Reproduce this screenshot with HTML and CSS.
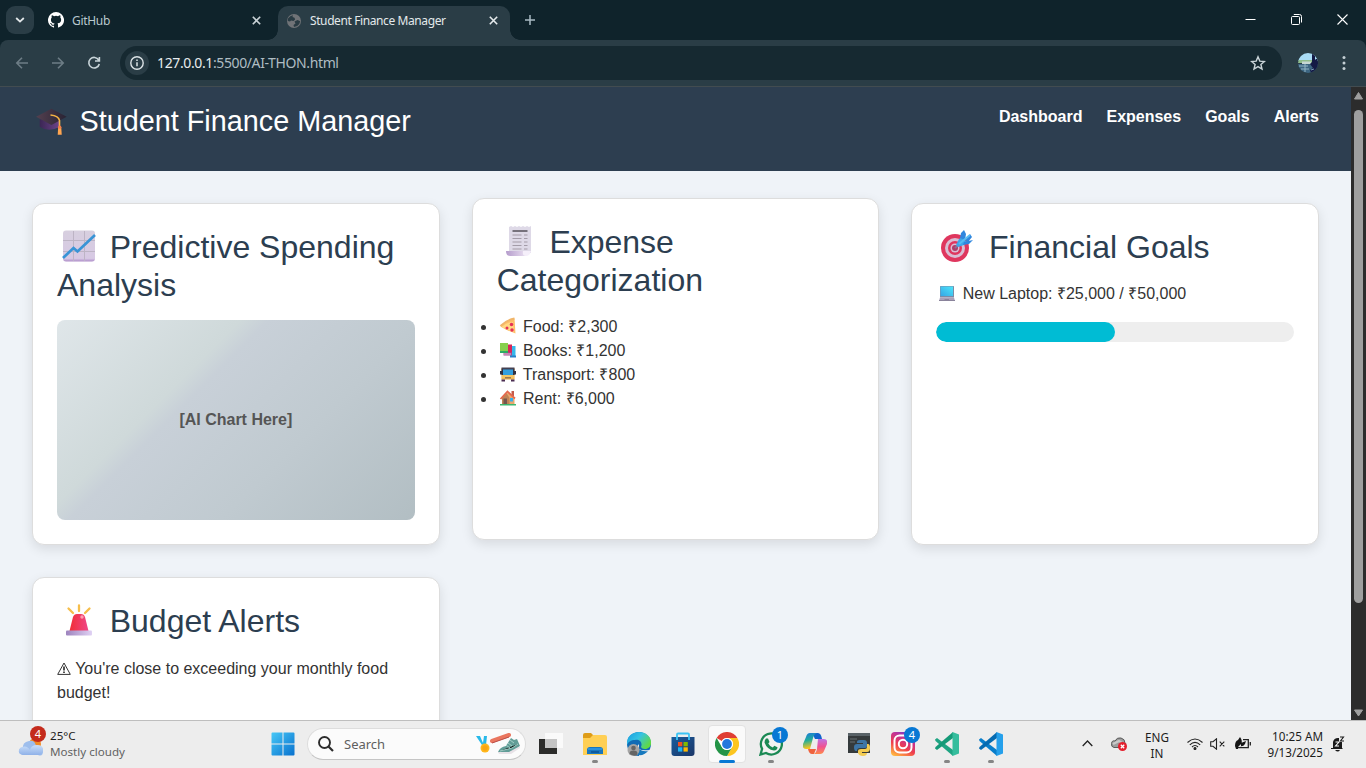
FILE: index.html
```html
<!DOCTYPE html>
<html lang="en">
<head>
<meta charset="utf-8">
<title>Student Finance Manager</title>
<link rel="stylesheet" href="styles.css">
</head>
<body>
<div class="browser">
  <div class="tabstrip">
    <div class="tab-search"><svg width="10" height="6" viewBox="0 0 10 6"><path d="M1.200 1l3.800 3.600L8.800 1" fill="none" stroke="#e3e8ea" stroke-width="1.800"/></svg></div>
    <div class="tab tab-idle">
      <svg width="16" height="16" viewBox="0 0 16 16"><path fill="#fff" d="M8 0a8 8 0 0 0-2.530 15.590c.4.070.55-.17.55-.38v-1.490c-2.010.37-2.530-.49-2.690-.94-.09-.23-.48-.94-.82-1.130-.28-.15-.68-.52-.010-.53.63-.010 1.080.58 1.230.82.72 1.210 1.870.87 2.330.66.070-.52.280-.87.510-1.070-1.780-.2-3.640-.89-3.640-3.950 0-.87.310-1.590.820-2.150-.080-.2-.36-1.020.080-2.120 0 0 .67-.21 2.200.82a7.400 7.400 0 0 1 4 0c1.530-1.040 2.200-.82 2.200-.82.440 1.100.160 1.920.080 2.120.510.560.820 1.270.820 2.150 0 3.070-1.870 3.750-3.650 3.950.290.250.540.730.540 1.480v2.200c0 .210.150.460.550.380A8 8 0 0 0 8 0z"/></svg>
      <span class="tab-title">GitHub</span>
      <svg class="tab-close" width="9" height="9" viewBox="0 0 9 9"><path d="M.8.8l7.400 7.400M8.200.8L.8 8.200" stroke="#c9d2d6" stroke-width="1.600"/></svg>
    </div>
    <div class="tab tab-active">
      <svg width="16" height="16" viewBox="0 0 16 16"><circle cx="8" cy="8" r="7" fill="#707377"/><path d="M2 5.500Q4 2.500 7 2.300L6.500 4l2 .8.6 1.700L7.500 8 5 7.500 4 8.500 1.800 8z" fill="#293b43"/><path d="M8.500 8.500l3-1.500 2.700 1.200q-.3 3-3 4.800l-3.200 1L7.500 12l2-1.500z" fill="#293b43"/></svg>
      <span class="tab-title">Student Finance Manager</span>
      <svg class="tab-close" width="9" height="9" viewBox="0 0 9 9"><path d="M.8.8l7.400 7.400M8.200.8L.8 8.200" stroke="#e5eaec" stroke-width="1.600"/></svg>
    </div>
    <svg class="new-tab" width="10" height="10" viewBox="0 0 10 10"><path d="M5 0v10M0 5h10" stroke="#a9bac4" stroke-width="1.500"/></svg>
    <div class="window-controls">
      <svg width="11" height="11" viewBox="0 0 11 11"><path d="M.5 5.500h10" stroke="#fff"/></svg>
      <svg width="11" height="11" viewBox="0 0 11 11" fill="none" stroke="#fff"><rect x=".5" y="2.500" width="8" height="8" rx="1"/><path d="M2.800.5H8.500a2 2 0 0 1 2 2v6"/></svg>
      <svg width="11" height="11" viewBox="0 0 11 11"><path d="M.5.5l10 10M10.500.5l-10 10" stroke="#fff" stroke-width="1.100"/></svg>
    </div>
  </div>
  <div class="toolbar">
    <div class="nav-buttons">
      <svg width="14" height="12" viewBox="0 0 14 12"><path d="M13 6H1.800M7 .8L1.800 6 7 11.200" fill="none" stroke="#6d7d86" stroke-width="1.600"/></svg>
      <svg width="14" height="12" viewBox="0 0 14 12"><path d="M1 6h11.200M7 .8L12.200 6 7 11.200" fill="none" stroke="#6d7d86" stroke-width="1.600"/></svg>
      <svg width="14" height="14" viewBox="0 0 14 14"><path d="M11.700 4A5.300 5.300 0 1 0 12.300 8M12.400 1v4H8" fill="none" stroke="#c8d4d9" stroke-width="1.600"/></svg>
    </div>
    <div class="omnibox">
      <span class="site-info"><svg width="14" height="14" viewBox="0 0 14 14"><circle cx="7" cy="7" r="6.200" fill="none" stroke="#dce3e6" stroke-width="1.400"/><path d="M7 6.200v4M7 3.600v1.500" stroke="#dce3e6" stroke-width="1.500"/></svg></span>
      <span class="url"><b>127.0.0.1</b>:5500/AI-THON.html</span>
      <svg class="star" width="16" height="16" viewBox="0 0 16 16"><path d="M8 1.800l1.800 4.300 4.600.4-3.500 3 1.100 4.500L8 11.600 4 14l1.100-4.500-3.500-3 4.600-.4z" fill="none" stroke="#cbd5d9" stroke-width="1.400"/></svg>
    </div>
    <svg class="avatar" width="20" height="20" viewBox="0 0 20 20"><defs><clipPath id="av"><circle cx="10" cy="10" r="10"/></clipPath></defs><g clip-path="url(#av)"><path fill="#a9dcf5" d="M0 0h20v8H0z"/><path fill="#90bd8c" d="M0 7h15v3H0z"/><path fill="#c6d7d4" d="M4 8.500h9v3.500H4z"/><path fill="#3d6682" d="M0 11h20v9H0z"/><path d="M1 13h9M3 16h8M7 11v8" stroke="#91b5c5"/><path fill="#141a45" d="M14 0h3v7l1-1h2v14h-7l-1-3 3-2-3-4 2-2z"/><path d="M13 17l3-1" stroke="#7b9db8"/></g></svg>
    <svg class="kebab" width="4" height="16" viewBox="0 0 4 16" fill="#c5d0d5"><circle cx="2" cy="2.500" r="1.500"/><circle cx="2" cy="8" r="1.500"/><circle cx="2" cy="13.500" r="1.500"/></svg>
  </div>
  <div class="viewport">
    <div class="page">
      <header class="site-header">
        <h1><span class="emoji"><svg viewBox="0 0 32 32"><defs><linearGradient id="cap" x2="1"><stop stop-color="#54404f"/><stop offset="1" stop-color="#292334"/></linearGradient><linearGradient id="capb" x2="1"><stop stop-color="#3b2654"/><stop offset="1" stop-color="#6b448a"/></linearGradient></defs><path fill="url(#capb)" d="M3 15v8q10 7 22 0v-9z"/><path fill="url(#cap)" d="M-1 12L16 3l17 9-17 9z"/><path d="M15 10q9 1 10 6v7" fill="none" stroke="#f5b344" stroke-width="1.800"/><path fill="#ffa550" d="M23.500 24h3.500l.5 8h-4.500z"/><circle cx="25.200" cy="23.500" r="1.900" fill="#f17d4d"/></svg></span> Student Finance Manager</h1>
        <nav><a>Dashboard</a><a>Expenses</a><a>Goals</a><a>Alerts</a></nav>
      </header>
      <main class="cards">
        <section class="card">
          <h2><span class="emoji"><svg viewBox="0 0 32 32"><defs><linearGradient id="ch" y2="1" x2="0"><stop stop-color="#d7cfdf"/><stop offset=".9" stop-color="#d7c9e4"/><stop offset="1" stop-color="#ad8cc8"/></linearGradient></defs><rect y=".5" width="32" height="31" rx="3" fill="url(#ch)"/><path d="M10.500 1v30M21.500 1v30M0 10.500h32M0 21.500h32" stroke="#bdb4c5"/><path d="M0 28l10.500-10 4 3.500L32 5" fill="none" stroke="#3994d6" stroke-width="2.700"/></svg></span> Predictive Spending Analysis</h2>
          <div class="chart">[AI Chart Here]</div>
        </section>
        <section class="card card-raised">
          <h2><span class="emoji"><svg viewBox="0 0 32 32"><defs><linearGradient id="sc" x2="1"><stop stop-color="#b59ccc"/><stop offset="1" stop-color="#eee6f4"/></linearGradient></defs><path fill="#ded9e7" d="M6 2l2-1 2 1 2-1 2 1 2-1 2 1 2-1 2 1 2-1 2 1 2-1v27H6z"/><path fill="url(#sc)" d="M3 26h17q1 5 5 5H7q-4 0-4-5z"/><path fill="#f5effa" d="M20 26h8q-1 5-5 5t-3-5z"/><path d="M9.500 6h15" stroke="#77727c" stroke-width="2"/><path d="M9.500 10h9M21 10h3.500M9.500 13.500h9M21 13.500h3.500M9.500 17h9M21 17h3.500M9.500 20.500h9M21 20.500h3.500M9.500 24h9M21 24h3.500" stroke="#a39ba8" stroke-width="1.200"/></svg></span> Expense Categorization</h2>
          <ul>
            <li><span class="emoji"><svg viewBox="0 0 32 32"><path fill="#ffbf68" d="M1 17Q12 4 29 1l2 30Q15 26 1 17z"/><path fill="#ffd883" d="M3 18Q14 8 26 8l2 20Q14 24 3 18z"/><path d="M1 16Q13 4 29 1" fill="none" stroke="#f0b56a" stroke-width="4"/><g fill="#e53157"><circle cx="23" cy="13" r="3.500"/><circle cx="14" cy="20" r="3"/><circle cx="24" cy="24" r="3.500"/></g></svg></span> Food: ₹2,300</li>
            <li><span class="emoji"><svg viewBox="0 0 32 32"><path fill="#36b7eb" d="M20 8h11v22H20z"/><path fill="#267fc8" d="M20 27h12v4H20z"/><path fill="#d82458" d="M12 5h12v19H12z"/><path fill="#a94990" d="M7 21h17v6H7z"/><path fill="#e3c9d9" d="M7 23h15v2H7z"/><path fill="#86cf4d" d="M0 2h16v18H0z"/><path fill="#2dac64" d="M0 18h16v4H0z"/></svg></span> Books: ₹1,200</li>
            <li><span class="emoji"><svg viewBox="0 0 32 32"><path fill="#e9a940" d="M3 4h26v23H3z"/><path fill="#444052" d="M3 3h26v5H3z"/><path fill="#303142" d="M3 7h3v11H3zM26 7h3v11h-3zM0 10h3v7H0zM29 10h3v7h-3z"/><path fill="#329fdf" d="M6 7h20v11H6z"/><path fill="#f3c564" d="M4 18h24v7H4z"/><path fill="#9b7952" d="M10 22h12v3H10z"/><path fill="#4b2d52" d="M3 27h7v4H3zM22 27h7v4h-7z"/></svg></span> Transport: ₹800</li>
            <li><span class="emoji"><svg viewBox="0 0 32 32"><path fill="#e9a76d" d="M4 15L17 4l12 12v13H4z"/><path fill="#c08256" d="M4 16l9-10 6 10v13H4z"/><path fill="#c65a4a" d="M23 2h5v10h-5z"/><path d="M1 18L15 3l15 14" fill="none" stroke="#e5674c" stroke-width="3.500"/><path fill="#74564f" d="M7 17h7v12H7z"/><path fill="#3aaee9" d="M20 16h6v7h-6z"/><path fill="#3eb66f" d="M0 28h32v3H0z"/></svg></span> Rent: ₹6,000</li>
          </ul>
        </section>
        <section class="card">
          <h2><span class="emoji goal"><svg viewBox="0 0 32 32"><circle cx="14" cy="18" r="14" fill="#df365e"/><circle cx="14" cy="18" r="10" fill="#d9bed4"/><circle cx="14" cy="18" r="7" fill="#df365e"/><circle cx="14" cy="18" r="4.500" fill="#d9bed4"/><circle cx="14" cy="18" r="3" fill="#ad3e69"/><path d="M14 18l9-8" stroke="#8b6f95" stroke-width="2"/><path fill="#3ea6e9" d="M15 15l3-6 3-2 5 5-3 3-6 2z"/><path fill="#2f86de" d="M19 8l1-5 3-3 2 4-1 6zM24 10l5-6 2 3-4 5zM23 12l9-2-4 4-6 1z"/><path d="M18 14l11-9" stroke="#57bcf3" stroke-width="2"/></svg></span> Financial Goals</h2>
          <p><span class="emoji"><svg viewBox="0 0 32 32"><defs><linearGradient id="lap" x1="1" x2="0" y2="1"><stop stop-color="#4ce6fb"/><stop offset="1" stop-color="#36a5e5"/></linearGradient></defs><rect x="2" width="28" height="23" rx="1" fill="#7b8ba7"/><path fill="url(#lap)" d="M3 1h25v19H3z"/><path fill="#aaa0b9" d="M2 23h28l2 7H0z"/><path fill="#8a839b" d="M0 28h32v2H0zM11 26h9v3h-9z"/></svg></span> New Laptop: ₹25,000 / ₹50,000</p>
          <div class="progress"><div class="progress-fill" style="width: 50%"></div></div>
        </section>
        <section class="card">
          <h2><span class="emoji"><svg viewBox="0 0 32 32"><defs><linearGradient id="si" x2="1"><stop stop-color="#f12e36"/><stop offset="1" stop-color="#ef4688"/></linearGradient><linearGradient id="sb" x2="1"><stop stop-color="#9d83be"/><stop offset="1" stop-color="#e0d2f4"/></linearGradient></defs><path fill="url(#si)" d="M6.500 27L10 13q1-3 4-3h4q3 0 4 3l3.500 14z"/><circle cx="19" cy="13" r="1.700" fill="#ff9cad"/><rect x="3" y="26.500" width="26" height="5" rx="1" fill="url(#sb)"/><path d="M16 1.500V7M5.500 4.500L10 9M26.500 4.500L22 9" stroke="#f6be4b" stroke-width="2.300" stroke-linecap="round"/></svg></span> Budget Alerts</h2>
          <p class="alert"><svg class="warning" width="14" height="13" viewBox="0 0 14 13"><path d="M7 1L13.300 12.400H.7z" fill="none" stroke="#333"/><path d="M7 4.500v4M7 9.500v1.500" stroke="#333" stroke-width="1.700"/></svg> You're close to exceeding your monthly food budget!</p>
        </section>
      </main>
    </div>
    <div class="scrollbar">
      <svg width="9" height="8" viewBox="0 0 9 8"><path d="M4.500.5L8.500 7h-8z" fill="#9f9f9f" stroke="#9f9f9f" stroke-linejoin="round"/></svg>
      <div class="thumb"></div>
      <svg width="9" height="8" viewBox="0 0 9 8"><path d="M.5 1h8l-4 6z" fill="#9f9f9f" stroke="#9f9f9f" stroke-linejoin="round"/></svg>
    </div>
  </div>
</div>
<footer class="taskbar">
  <div class="weather">
    <div class="weather-icon"><svg width="26" height="20" viewBox="0 0 26 20"><defs><linearGradient id="cl" x2="0" y2="1"><stop stop-color="#cadff9"/><stop offset="1" stop-color="#8fb1e8"/></linearGradient></defs><circle cx="17" cy="6" r="6" fill="#f08b28"/><path fill="#9ebeec" d="M5 11Q4 4 11 3q6-1 7 5 7-1 7 5t-5 4H5q-5-1-4-5 1-3 4-1z"/><path fill="url(#cl)" d="M4 9q5-2 8 3 1-5 7-5 6 0 6 5 0 5-5 5H5q-5-1-4-5 1-3 3-3z"/></svg><span class="badge badge-red">4</span></div>
    <div class="weather-text"><span>25°C</span><span class="muted">Mostly cloudy</span></div>
  </div>
  <div class="app"><svg width="24" height="24" viewBox="0 0 24 24"><defs><linearGradient id="win" x2="1" y2="1"><stop stop-color="#47c8f7"/><stop offset="1" stop-color="#0871ce"/></linearGradient></defs><path fill="url(#win)" d="M.5 1.500q0-1 1-1H11.500v11H.5zM12.500.5h10q1 0 1 1v10h-11zM.5 12.500h11v11h-10q-1 0-1-1zM12.500 12.500h11v10q0 1-1 1h-10z"/></svg></div>
  <div class="search">
    <svg width="16" height="16" viewBox="0 0 16 16"><circle cx="6.500" cy="6.500" r="5.500" fill="none" stroke="#2c2c2c" stroke-width="1.900"/><path d="M10.500 10.500l4.500 4.500" stroke="#2c2c2c" stroke-width="2.200"/></svg>
    <span>Search</span>
    <svg class="search-art" width="46" height="24" viewBox="0 0 46 24"><path fill="#28b9e9" d="M1 4h4l3 7 1-7h3l-1 9H7z"/><circle cx="10" cy="16" r="4.500" fill="#ffb71c"/><circle cx="10" cy="16" r="2.800" fill="#f9a613"/><path d="M17 9L34 3" stroke="#ea765f" stroke-width="4" stroke-linecap="round"/><path d="M17 11L34 5" stroke="#bb4e49" stroke-width="1"/><path fill="#629d97" d="M23 20q2-5 8-6l5-8 3 2 3-1 3 7-4 4-9 3H25z"/><path d="M25 19l12-3 6-4M31 13l4 3M33 11l4 3M35 8l4 3" stroke="#a4cfc7" stroke-width="1"/><path fill="#e8e2e7" d="M23 20h11l11-6v2l-9 6H24z"/></svg>
  </div>
  <div class="app"><svg width="24" height="24" viewBox="0 0 24 24"><path fill="#2c2c2a" d="M0 7h18v15H0z"/><path fill="#fafafa" d="M6 1h18v15H6z"/><path fill="#c4c4c4" d="M6 7h12v9H6z"/></svg></div>
  <div class="app"><svg width="24" height="24" viewBox="0 0 24 24"><path fill="#de9c18" d="M0 3q0-2 2-2h6l3 3-3 5H0z"/><path fill="#ffcf54" d="M0 6h7l3-3h12q2 0 2 2v18H0z"/><path fill="#1977bf" d="M4 22v-4q0-3 3-3h10q3 0 3 3v4z"/><path fill="#2b91dd" d="M5 16h14v2H5z"/><path d="M8 20h8" stroke="#0e5b9e" stroke-width="2"/></svg><i class="dot"></i></div>
  <div class="app"><svg width="24" height="24" viewBox="0 0 24 24"><defs><linearGradient id="ed" x2="1" y2=".6"><stop stop-color="#179be0"/><stop offset=".5" stop-color="#35c3e3"/><stop offset="1" stop-color="#61d943"/></linearGradient></defs><circle cx="12" cy="12" r="12" fill="#106bb5"/><path fill="url(#ed)" d="M0 13C-1 5 5 0 12 0c8 0 13 6 12 12-1 6-9 6-10 3 2-5-2-8-6-7-4 0-7 2-8 5z"/><path fill="#eee" d="M12 12q-3 3 0 5t11 1v6H12z"/><path fill="#1678bd" d="M12 17q4 3 9 2-4 5-10 4z"/><circle cx="6.500" cy="18" r="6" fill="#a4a4a4"/><circle cx="6.500" cy="16" r="2.300" fill="#656565"/><path fill="#656565" d="M2.500 21.500q0-3 4-3t4 3-4 2-4-2z"/></svg></div>
  <div class="app"><svg width="24" height="24" viewBox="0 0 24 24"><defs><linearGradient id="st" y2="1"><stop stop-color="#185c9d"/><stop offset="1" stop-color="#1b3667"/></linearGradient></defs><path fill="url(#st)" d="M.5 5h23v16q0 3-3 3h-17q-3 0-3-3z"/><path d="M6 8V2.500q0-1 1-1h10q1 0 1 1V8" fill="none" stroke="#3ac3f4" stroke-width="1.800"/><path fill="#f25022" d="M7 10h4.300v4.300H7z"/><path fill="#7fba00" d="M12.500 10h4.300v4.300h-4.300z"/><path fill="#20b5f4" d="M7 15.300h4.300v4.300H7z"/><path fill="#ffb900" d="M12.500 15.300h4.300v4.300h-4.300z"/></svg></div>
  <div class="app app-active"><svg width="24" height="24" viewBox="0 0 24 24"><circle cx="12" cy="12" r="12" fill="#fff"/><path fill="#df3e34" d="M1.600 6A12 12 0 0 1 22.400 6H12a6 6 0 0 0-5.200 3z"/><path fill="#fcc51f" d="M22.400 6A12 12 0 0 1 12 24l5.200-9A6 6 0 0 0 12 6z"/><path fill="#249447" d="M1.600 6A12 12 0 0 0 12 24l5.200-9A6 6 0 0 1 6.800 15z"/><circle cx="12" cy="12" r="6" fill="#fff"/><circle cx="12" cy="12" r="4.900" fill="#2376dc"/></svg><i class="dot"></i></div>
  <div class="app"><svg width="24" height="24" viewBox="0 0 24 24"><path d="M1.500 22.500l1.600-5.600A10.500 10.500 0 1 1 7 21z" fill="#f2f2f2" stroke="#1b8954" stroke-width="2.300"/><path fill="#1b8954" d="M7 6.500h2L10.500 10l-1.200 1.500q1.500 3 4.500 4l1.500-1.700 3.200 1.500q0 3-3.500 3.200-7-1-9.500-8Q5.500 8 7 6.500z"/></svg><span class="badge">1</span><i class="dot"></i></div>
  <div class="app"><svg width="24" height="24" viewBox="0 0 24 24"><defs><linearGradient id="co" y2="1" x2=".2"><stop stop-color="#1d77de"/><stop offset=".5" stop-color="#20ae9b"/><stop offset="1" stop-color="#fdc51d"/></linearGradient><linearGradient id="cp" y2="1" x2="0"><stop stop-color="#bd74e6"/><stop offset=".5" stop-color="#ef5293"/><stop offset="1" stop-color="#ff894b"/></linearGradient></defs><path fill="#1264cd" d="M9 1h6q3 0 4 6h-7z"/><path fill="url(#co)" d="M3 5q1-4 4-4h7q-3 1-4 5L7 17H3q-4 0-3-5z"/><path fill="#ef623e" d="M5 17h8l-2 5H9q-3 0-4-5z"/><path fill="url(#cp)" d="M15 7h6q4 0 3 5l-3 7q-1 3-4 3h-7q3 0 4-5z"/></svg></div>
  <div class="app"><svg width="24" height="24" viewBox="0 0 24 24"><path fill="#353a3c" d="M1 1h22v20H1z"/><path fill="#596267" d="M1 1h22v3H1z"/><path d="M3 7h7M3 10h5" stroke="#697175"/><path fill="#3d75a7" d="M13 8h4q3 0 3 3v3q0 2-3 2h-4q-3 0-3 3H9q-2 0-2-4 0-3 3-3h6v-1h-6v-1q0-2 3-2z"/><path fill="#f3cb52" d="M20 12h1q2 0 2 4t-3 4h-5v1h5q0 3-4 3t-5-3v-2q0-2 3-2h4q2 0 2-2z"/></svg></div>
  <div class="app"><svg width="24" height="24" viewBox="0 0 24 24"><defs><linearGradient id="ig" x1=".2" x2=".7" y1="1" y2="0"><stop stop-color="#ffb541"/><stop offset=".4" stop-color="#ef3e4d"/><stop offset=".75" stop-color="#c23297"/><stop offset="1" stop-color="#6741d3"/></linearGradient></defs><rect width="24" height="24" rx="4" fill="url(#ig)"/><rect x="3.500" y="3.500" width="17" height="17" rx="5" fill="none" stroke="#fff" stroke-width="2"/><circle cx="12" cy="12" r="4.200" fill="none" stroke="#fff" stroke-width="2"/><circle cx="17" cy="7" r="1" fill="#fff"/></svg><span class="badge">4</span></div>
  <div class="app"><svg width="24" height="24" viewBox="0 0 24 24"><path fill="#1fa483" d="M0 7.500L2 6l16 12V24L.5 9z"/><path fill="#159a78" d="M0 16.500L2 18 18 6V0L.5 15z"/><path fill="#35bd9d" d="M17.500 0L24 2.500v19L17.500 24z"/></svg><i class="dot"></i></div>
  <div class="app"><svg width="24" height="24" viewBox="0 0 24 24"><path fill="#087ecb" d="M0 7.500L2 6l16 12V24L.5 9z"/><path fill="#066bb1" d="M0 16.500L2 18 18 6V0L.5 15z"/><path fill="#25a0eb" d="M17.500 0L24 2.500v19L17.500 24z"/></svg><i class="dot"></i></div>
  <div class="tray">
    <svg width="11" height="7" viewBox="0 0 11 7"><path d="M.7 6l4.800-5 4.800 5" fill="none" stroke="#222" stroke-width="1.300"/></svg>
    <svg width="16" height="14" viewBox="0 0 16 14"><path d="M3 10.500Q0 10 .5 6.500T4 4Q6 0 10 1t4 5q2 2 0 4.500z" fill="#9d9d9d" stroke="#5b5b5b"/><path d="M2 7l6-3 5 3" fill="none" stroke="#c9c9c9" stroke-width="2"/><circle cx="11.500" cy="9.500" r="4.500" fill="#e41f2d"/><path d="M9.800 7.800l3.400 3.400M13.200 7.800l-3.400 3.400" stroke="#fff" stroke-width="1.300"/></svg>
    <div class="lang"><span>ENG</span><span>IN</span></div>
    <svg width="16" height="12" viewBox="0 0 16 12" fill="none" stroke="#222" stroke-width="1.100"><path d="M.5 4.500q7.500-7 15 0M2.800 6.800q5.200-5 10.400 0M5 9q3-3 6 0"/><circle cx="8" cy="10.500" r="1" fill="#222"/></svg>
    <svg width="16" height="12" viewBox="0 0 16 12" fill="none" stroke="#222" stroke-width="1.100"><path d="M.7 3.700H3L6.500.8v10.400L3 8.300H.7zM9.700 3.700l4.600 4.600M14.300 3.700L9.700 8.300"/></svg>
    <svg width="16" height="13" viewBox="0 0 16 13"><path d="M8 2.700h5.300v8H3M15.300 5v3.500" fill="none" stroke="#222" stroke-width="1.300"/><path fill="#151515" d="M0 9Q0 4 3 3l2-3q3 4 1 7L3 10v2H1zM6 9V6l5-2-1 3q-2 3-5 2z"/></svg>
    <div class="clock"><span>10:25 AM</span><span>9/13/2025</span></div>
    <svg width="14" height="16" viewBox="0 0 14 16"><path fill="#1a1a1a" d="M2 12V6q1-4 5-4h1v4h3v6l1 1H0v-1zM4 14h5q-2 3-5 0z"/><path d="M4.500 6h3.500L4.500 10H8" fill="none" stroke="#fafafa" stroke-width="1.100"/><path d="M9 1h3.500L9.500 5H13" fill="none" stroke="#1a1a1a" stroke-width="1.100"/></svg>
  </div>
</footer>
</body>
</html>
```

FILE: styles.css
```css
* { box-sizing: border-box; }
body { margin: 0; width: 1366px; height: 768px; overflow: hidden; display: flex; flex-direction: column; font-family: "Liberation Sans", Arial, sans-serif; font-size: 16px; line-height: 1.5; color: #333; }
svg { flex: none; display: block; }
.browser { height: 720px; display: flex; flex-direction: column; background: #0f232b; }

.tabstrip { height: 40px; flex: none; display: flex; font-family: "Noto Sans", "Open Sans", sans-serif; font-size: 12px; color: #b9c8ce; }
.tab-search { width: 28px; height: 28px; margin: 6px 0 0 6px; border-radius: 9px; background: #2a3d46; display: flex; align-items: center; justify-content: center; }
.tab { display: flex; align-items: center; gap: 8px; }
.tab-idle { width: 234px; margin-left: 14px; padding-right: 21px; }
.tab-title { line-height: 16px; white-space: nowrap; letter-spacing: -.3px; }
.tab-idle .tab-title { padding-top: 2px; }
.tab-close { margin-left: auto; }
.tab-active { position: relative; width: 232px; height: 34px; margin: 6px 0 0 -4px; padding: 0 12px 5px 8px; background: #2a3d46; border-radius: 10px 10px 0 0; color: #e3e9eb; }
.tab-active .tab-title { letter-spacing: -.4px; }
.tab-active::before, .tab-active::after { content: ""; position: absolute; bottom: 0; width: 10px; height: 10px; }
.tab-active::before { left: -10px; background: radial-gradient(circle at 0 0, transparent 9.500px, #2a3d46 10px); }
.tab-active::after { right: -10px; background: radial-gradient(circle at 100% 0, transparent 9.500px, #2a3d46 10px); }
.new-tab { margin: 15px 0 0 15px; }
.window-controls { margin: 14px 18px 0 auto; display: flex; gap: 35px; }

.toolbar { height: 47px; flex: none; display: flex; align-items: center; background: #2a3d46; border-bottom: 1px solid #424c50; border-radius: 8px 8px 0 0; }
.nav-buttons { width: 120px; padding-left: 15px; display: flex; align-items: center; gap: 22px; }
.omnibox { width: 1162px; height: 34px; border-radius: 17px; background: #162931; display: flex; align-items: center; padding: 0 16px 0 5px; }
.site-info { width: 24px; height: 24px; border-radius: 50%; background: #2a3d46; display: flex; align-items: center; justify-content: center; margin-right: 8px; }
.url { font: 14px/20px "Noto Sans", "Open Sans", sans-serif; letter-spacing: -.38px; color: #afbdc3; }
.url b { font-weight: 400; color: #e7ecee; }
.star { margin-left: auto; }
.avatar { margin-left: 16px; }
.kebab { margin-left: 24px; }

.viewport { flex: 1; min-height: 0; display: flex; }
.page { flex: 1; overflow: hidden; background: #eff3f8; }
.site-header { height: 84px; padding: 17px 32px 0; display: flex; justify-content: space-between; background: #2d3e50; color: #fff; }
h1, h2 { margin: 0; font-weight: 400; line-height: 1.2; }
h1 { font-size: 28.800px; }
h2 { font-size: 32px; margin-bottom: 15px; color: #2c3e50; }
.emoji { display: inline-flex; width: 1.370em; height: 1em; justify-content: center; vertical-align: -.14em; }
.emoji svg { width: 1em; height: 1em; overflow: visible; }
.goal svg { margin-right: 2px; }
nav { padding-top: 1px; display: flex; gap: 24px; font-weight: 700; }
.cards { display: grid; grid-template-columns: repeat(3, 1fr); gap: 32px; padding: 32px; }
.card { padding: 24px; background: #fff; border: 1px solid #ddd; border-radius: 12px; box-shadow: 0 4px 12px rgba(0, 0, 0, .1); }
.card-raised { transform: translateY(-5px); }
.chart { height: 200px; border-radius: 8px; background: linear-gradient(135deg, #dfe6e9, #cfd9da 33%, #c8d0d8 38%, #c0cad0 65%, #b2bec3); display: flex; align-items: center; justify-content: center; font-weight: 700; color: #555; }
p { margin: 16px 0; }
.alert { margin-top: 17px; }
ul { margin: 0; padding: 0; }
.progress { height: 20px; overflow: hidden; border-radius: 10px; background: #eee; }
.progress-fill { height: 100%; border-radius: 10px; background: #00bcd4; }
.warning { display: inline-block; vertical-align: -1px; }
.scrollbar { width: 15px; background: #2c2c2c; display: flex; flex-direction: column; align-items: center; padding: 5px 0 3px; }
.thumb { width: 9px; height: 493px; margin: 10px 0 auto; border-radius: 5px; background: #9f9f9f; }

.taskbar { height: 48px; display: flex; align-items: center; padding-bottom: 2px; background: #ededed; border-top: 1px solid #bebebe; font: 12px/16px "Noto Sans", "Open Sans", sans-serif; color: #1c1c1c; }
.weather { width: 261px; padding-left: 18px; display: flex; gap: 6px; }
.weather-icon { position: relative; width: 26px; padding-top: 10px; }
.weather-text { display: flex; flex-direction: column; font-size: 11.600px; }
.muted { color: #626262; }
.badge { position: absolute; width: 16px; height: 16px; border-radius: 50%; background: #0878d4; color: #fff; font-size: 11px; line-height: 16px; text-align: center; }
.badge-red { top: -2px; right: -2px; background: #c42b1c; }
.app { position: relative; flex: none; width: 44px; height: 40px; display: flex; align-items: center; justify-content: center; }
.app .badge { top: 3px; right: 5px; }
.app-active::before { content: ""; position: absolute; inset: 1px 3px; background: #fafafa; border: 1px solid #e2e2e2; border-radius: 4px; }
.app svg { position: relative; }
.dot { position: absolute; bottom: 1px; left: 19px; width: 6px; height: 3px; border-radius: 2px; background: #858585; }
.app-active .dot { left: 14px; width: 16px; background: #0878d4; }
.search { flex: none; width: 219px; height: 32px; margin: 0 3px 0 2px; padding: 0 4px 0 10px; display: flex; align-items: center; gap: 10px; border: 1px solid #ddd; border-bottom-color: #c5c5c5; border-radius: 16px; background: #fbfbfb; font-size: 13px; color: #5f5f5f; }
.search-art { margin-left: auto; }
.tray { margin-left: auto; padding-right: 13px; display: grid; grid-template-columns: 32px 32px 44px 32px 14px 36px 62px 30px; align-items: center; justify-items: center; font-size: 11.700px; }
.lang, .clock { display: flex; flex-direction: column; }
.lang { align-items: center; padding-top: 2px; }
.clock { justify-self: end; align-items: flex-end; white-space: nowrap; }
```
